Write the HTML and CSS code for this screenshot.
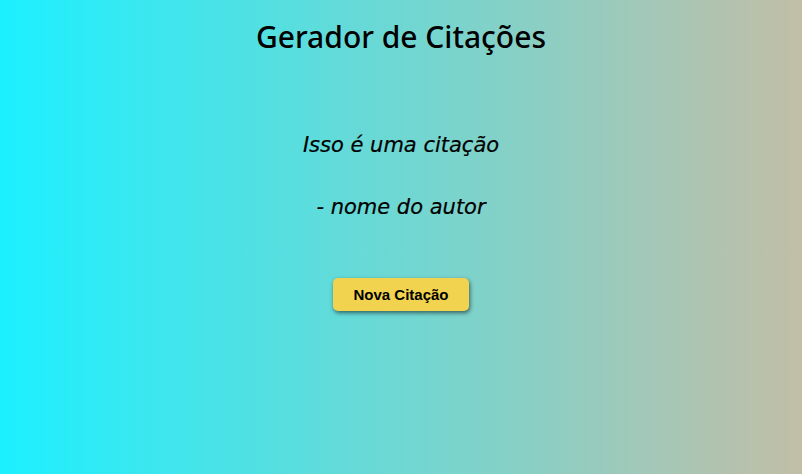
FILE: index.html
```html
<!DOCTYPE html>
<html lang="pt">
<head>
<meta charset="utf-8">
<title>Gerador de Citações</title>
<link rel="stylesheet" href="styles.css">
</head>
<body>
<main class="app">
  <h1 class="title">Gerador de Citações</h1>
  <section class="quote-box">
    <p class="quote">Isso é uma citação</p>
    <p class="author">- nome do autor</p>
  </section>
  <button class="btn">Nova Citação</button>
</main>
</body>
</html>
```

FILE: styles.css
```css
html, body {
  margin: 0;
  height: 100%;
}
body {
  background: linear-gradient(to right, #1cf0ff, #c2bea6);
  font-family: "Noto Sans", "Open Sans", sans-serif;
  color: #000;
}
.app {
  display: flex;
  flex-direction: column;
  align-items: center;
}
.title {
  margin: 17px 0 0;
  font-size: 30px;
  font-weight: 500;
  line-height: 40px;
}
.quote-box {
  margin-top: 73px;
  display: flex;
  flex-direction: column;
  align-items: center;
  gap: 32px;
}
.quote, .author {
  margin: 0;
  font-family: "DejaVu Sans", sans-serif;
  font-style: italic;
  font-size: 21px;
  line-height: 30px;
  -webkit-text-stroke: 0.2px #000;
}
.btn {
  margin-top: 56px;
  width: 136px;
  height: 33px;
  background: #f2d350;
  border: none;
  border-radius: 5px;
  box-shadow: 1px 2px 4px rgba(0,0,0,0.55);
  font-family: "Liberation Sans", Arial, sans-serif;
  font-weight: bold;
  font-size: 15px;
  color: #000;
  cursor: pointer;
}
```
